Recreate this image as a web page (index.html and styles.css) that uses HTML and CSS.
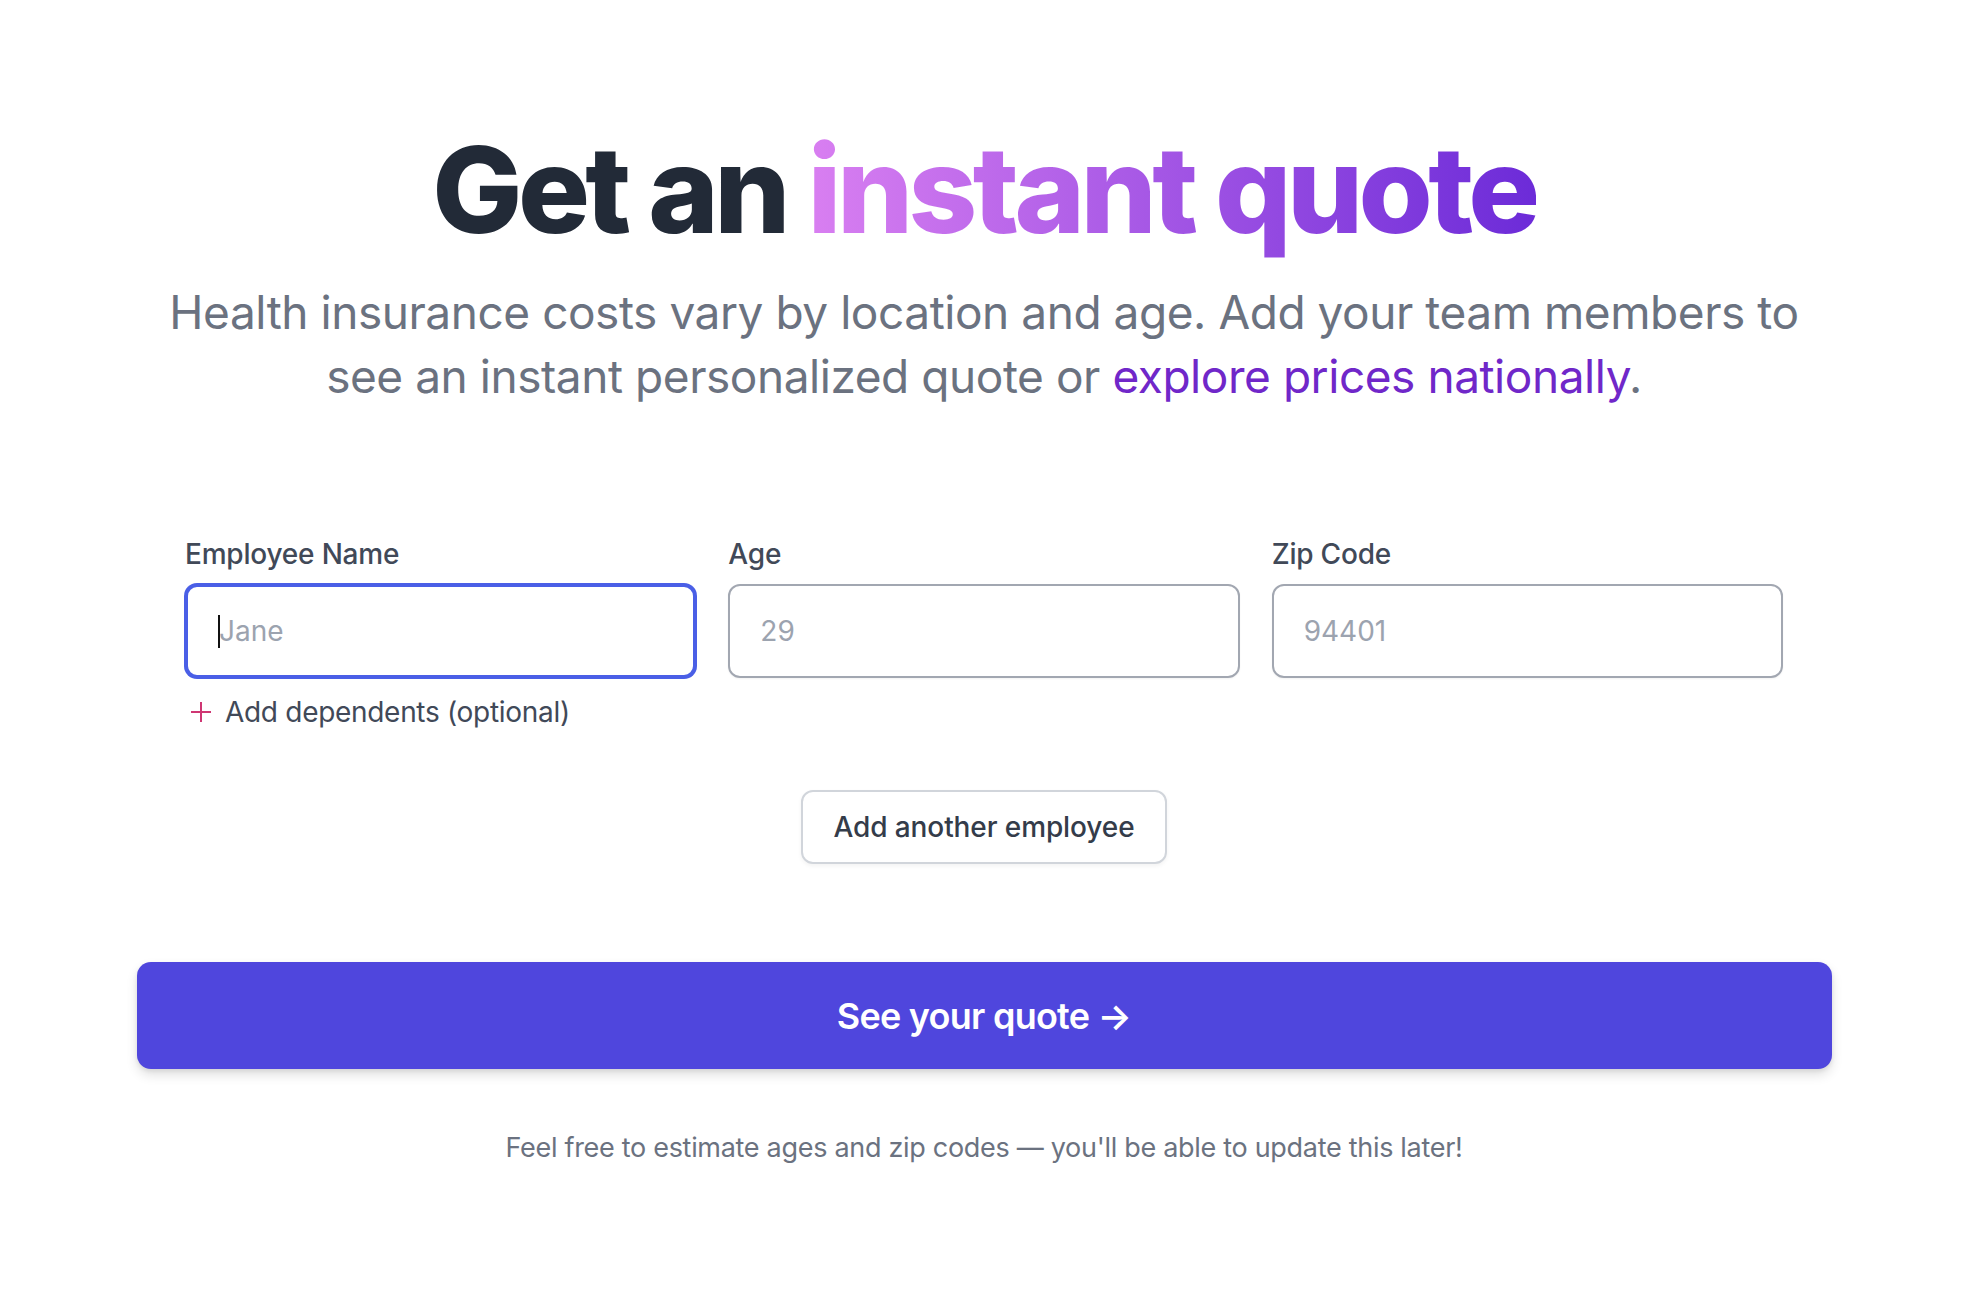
FILE: index.html
```html
<!DOCTYPE html>
<html lang="en">
<head>
    <meta charset="UTF-8">
    <meta name="viewport" content="width=device-width, initial-scale=1.0">
    <title>Get an instant quote</title>
    <link rel="stylesheet" href="styles.css">
</head>
<body>

    <main class="quote">
        <h1 class="quote-title">Get an <span class="accent">instant quote</span></h1>
        <p class="quote-lead">
            Health insurance costs vary by location and age. Add your team members to<br>
            see an instant personalized quote or <a href="#" class="lead-link">explore prices nationally</a>.
        </p>

        <form class="quote-form" onsubmit="return false;">
            <div class="fields">
                <div class="field">
                    <label class="field-label" for="name">Employee Name</label>
                    <div class="input-wrap">
                        <input id="name" class="field-input is-focused" type="text" placeholder="Jane">
                        <span class="caret"></span>
                    </div>
                    <button type="button" class="add-dependents">
                        <svg class="plus" viewBox="0 0 22 22"><path d="M11 1v20M1 11h20"/></svg>
                        Add dependents (optional)
                    </button>
                </div>
                <div class="field">
                    <label class="field-label" for="age">Age</label>
                    <input id="age" class="field-input" type="text" placeholder="29">
                </div>
                <div class="field">
                    <label class="field-label" for="zip">Zip Code</label>
                    <input id="zip" class="field-input" type="text" placeholder="94401">
                </div>
            </div>

            <div class="another-row">
                <button type="button" class="btn-outline">Add another employee</button>
            </div>

            <button type="submit" class="btn-primary">See your quote &rarr;</button>
        </form>

        <p class="quote-note">Feel free to estimate ages and zip codes — you'll be able to update this later!</p>
    </main>

</body>
</html>
```

FILE: styles.css
```css
/* General Reset */
body {
    font-family: 'Inter', 'Liberation Sans', sans-serif;
    margin: 0;
    padding: 0;
    background-color: #ffffff;
    color: #1f2937;
}

.quote {
    width: 1695px;
    margin: 0 auto;
    padding-top: 130px;
    text-align: center;
}

/* Heading */
.quote-title {
    margin: 0;
    font-size: 120px;
    line-height: 120px;
    font-weight: 800;
    letter-spacing: -4.6px;
    color: #222a37;
}

.accent {
    background: linear-gradient(to right, #d97ff1, #6c2bd8);
    -webkit-background-clip: text;
    background-clip: text;
    color: transparent;
}

.quote-lead {
    margin: 30px auto 0;
    font-size: 46px;
    line-height: 64px;
    letter-spacing: -0.45px;
    color: #6b7280;
}

.lead-link {
    color: #7027c9;
    text-decoration: none;
}

/* Form */
.quote-form {
    margin-top: 126px;
}

.fields {
    width: 1598px;
    margin: 0 auto;
    display: grid;
    grid-template-columns: repeat(3, 1fr);
    gap: 32px;
    text-align: left;
}

.field {
    display: flex;
    flex-direction: column;
}

.field-label {
    font-size: 28px;
    line-height: 40px;
    font-weight: 500;
    letter-spacing: -0.2px;
    color: #414958;
    margin-bottom: 10px;
}

.input-wrap {
    position: relative;
}

.field-input {
    box-sizing: border-box;
    width: 100%;
    height: 94px;
    padding: 0 30px;
    font-family: inherit;
    font-size: 28px;
    color: #1f2937;
    border: 2px solid #a2a7b1;
    border-radius: 12px;
    background: #fff;
    outline: none;
    box-shadow: 0 1px 2px rgba(0, 0, 0, 0.05);
}

.field-input::placeholder {
    color: #9ca3af;
}

.field-input.is-focused {
    border: 3px solid #4a5fe6;
    box-shadow: 0 0 0 1px #4a5fe6;
    padding-left: 31px;
}

.caret {
    position: absolute;
    left: 33px;
    top: 31px;
    width: 2px;
    height: 33px;
    background: #111;
}

.add-dependents {
    display: flex;
    align-items: center;
    gap: 13px;
    margin-top: 14px;
    padding: 0 0 0 5px;
    border: none;
    background: none;
    font-family: inherit;
    font-size: 28px;
    line-height: 40px;
    letter-spacing: -0.3px;
    color: #414958;
    cursor: pointer;
    text-align: left;
}

.plus {
    width: 22px;
    height: 22px;
    stroke: #cf3673;
    stroke-width: 2;
    fill: none;
}

.another-row {
    margin-top: 58px;
    display: flex;
    justify-content: center;
}

.btn-outline {
    padding: 15px 30px;
    font-family: inherit;
    font-size: 28px;
    line-height: 40px;
    font-weight: 500;
    letter-spacing: -0.1px;
    color: #343c4a;
    background: #fff;
    border: 2px solid #d1d5db;
    border-radius: 12px;
    box-shadow: 0 2px 4px rgba(0, 0, 0, 0.05);
    cursor: pointer;
}

/* Button Styling */
.btn-primary {
    display: block;
    width: 100%;
    margin-top: 98px;
    padding: 26px 0 25px;
    font-family: inherit;
    font-size: 36px;
    line-height: 56px;
    font-weight: 600;
    letter-spacing: -0.75px;
    color: #ffffff;
    background-color: #4f46dd;
    border: none;
    border-radius: 14px;
    box-shadow: 0 6px 12px rgba(0, 0, 0, 0.12), 0 2px 4px rgba(0, 0, 0, 0.08);
    cursor: pointer;
}

.quote-note {
    margin: 59px 0 0;
    font-size: 27px;
    line-height: 40px;
    letter-spacing: -0.3px;
    color: #6b7280;
}
```
